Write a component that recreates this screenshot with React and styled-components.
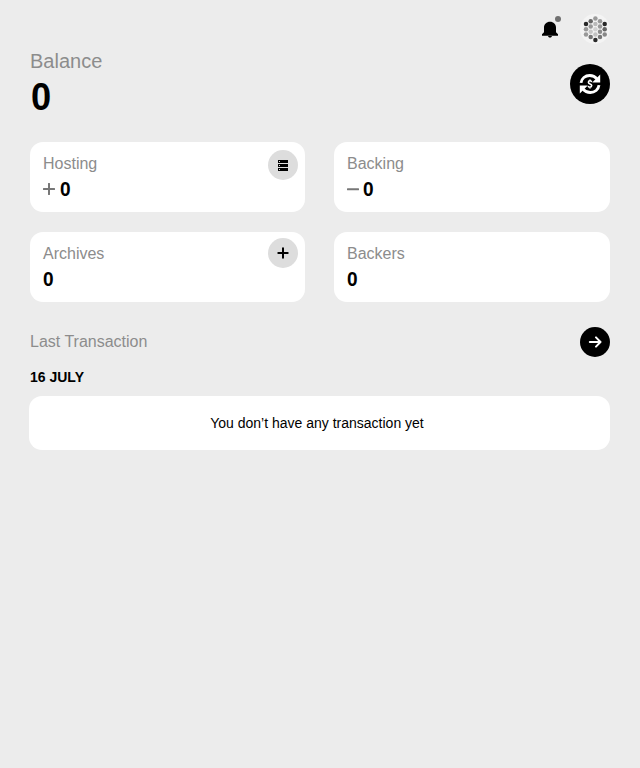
import React from "react";
import styled, { createGlobalStyle } from "styled-components";

const GlobalStyle = createGlobalStyle`
  * { box-sizing: border-box; }
  body {
    margin: 0;
    background: #ececec;
    color: #000;
    font-family: "Liberation Sans", Arial, sans-serif;
  }
`;

const Page = styled.main`
  min-height: 768px;
  padding: 14px 30px 0;
`;

const TopBar = styled.header`
  display: flex;
  justify-content: flex-end;
  align-items: center;
  gap: 18px;
  height: 30px;
`;

const BellButton = styled.div`
  position: relative;
  width: 20px;
  height: 20px;
  margin-right: 2px;
  svg { display: block; }
`;

const UnreadDot = styled.span`
  position: absolute;
  top: -3px;
  right: -1px;
  width: 6px;
  height: 6px;
  border-radius: 50%;
  background: #707070;
`;

const AvatarSvg = styled.svg`
  display: block;
  width: 30px;
  height: 30px;
`;

const BalanceRow = styled.section`
  display: flex;
  justify-content: space-between;
  align-items: flex-start;
  height: 98px;
  padding-top: 6px;
`;

const BalanceLabel = styled.div`
  font-size: 20px;
  line-height: 23px;
  color: #8c8c8c;
`;

const BalanceValue = styled.div`
  margin-top: 0;
  padding-left: 0.5px;
  font-size: 39px;
  font-weight: 700;
  line-height: 47px;
`;

const Digits = styled.span`
  display: inline-block;
  transform: scaleX(0.93);
  transform-origin: left center;
`;

const RoundButton = styled.button`
  display: flex;
  align-items: center;
  justify-content: center;
  flex: none;
  width: ${(p) => p.$size}px;
  height: ${(p) => p.$size}px;
  margin: ${(p) => p.$top || 0}px 0 0;
  padding: 0;
  border: 0;
  border-radius: 50%;
  background: ${(p) => (p.$light ? "#dddddd" : "#000")};
  svg { display: block; }
`;

const CardGrid = styled.section`
  display: grid;
  grid-template-columns: 275px 276px;
  grid-auto-rows: 70px;
  column-gap: 29px;
  row-gap: 20px;
`;

const Card = styled.article`
  display: flex;
  justify-content: space-between;
  padding: 0 7px 0 13px;
  border-radius: 13px;
  background: #fff;
`;

const CardLabel = styled.div`
  margin-top: 12px;
  font-size: 16px;
  line-height: 19px;
  color: #8c8c8c;
`;

const CardValue = styled.div`
  display: flex;
  align-items: center;
  gap: ${(p) => p.$gap}px;
  margin-top: 4px;
  font-size: 20.5px;
  font-weight: 700;
  line-height: 24px;
`;

const SectionHeader = styled.div`
  display: flex;
  align-items: center;
  justify-content: space-between;
  height: 30px;
  margin-top: 25px;
  font-size: 16px;
  color: #8c8c8c;
`;

const DateLabel = styled.h2`
  margin: 12px 0 11px;
  font-size: 14px;
  font-weight: 700;
  line-height: 16px;
`;

const EmptyCard = styled.div`
  display: flex;
  align-items: center;
  justify-content: center;
  height: 54px;
  margin-left: -1px;
  padding-right: 5px;
  border-radius: 13px;
  background: #fff;
  font-size: 14px;
`;

const AVATAR_DOTS = [
  [15.4, 4.6, "#999"], [15.4, 9.9, "#bababa"], [15.4, 15.2, "#d2d2d2"], [15.4, 20.5, "#c2c2c2"], [15.4, 25.9, "#292929"],
  [10.7, 7.2, "#666"], [10.7, 12.5, "#999"], [10.7, 17.8, "#c6c6c6"], [10.7, 23.1, "#777"],
  [20, 7.2, "#999"], [20, 12.5, "#999"], [20, 17.8, "#8c8c8c"], [20, 23.1, "#777"],
  [6, 9.9, "#292929"], [6, 15.2, "#999"], [6, 20.5, "#999"],
  [24.7, 9.9, "#292929"], [24.7, 15.2, "#666"], [24.7, 20.5, "#888"],
];

const Avatar = () => (
  <AvatarSvg viewBox="0 0 30 30">
    <circle cx="15" cy="15" r="15" fill="#f4f4f4" />
    {AVATAR_DOTS.map(([x, y, fill]) => (
      <circle key={`${x}-${y}`} cx={x} cy={y} r="2.25" fill={fill} />
    ))}
  </AvatarSvg>
);

const BellIcon = () => (
  <svg width="20" height="20" viewBox="0 0 20 20">
    <path d="M10 2.8C6.5 2.8 4 5.2 4 8.6v4.6L2 15.2v1.6h16v-1.6l-2-2V8.6c0-3.4-2.5-5.8-6-5.8ZM7.9 16.6h4.2a2.1 2.1 0 0 1-4.2 0Z" />
  </svg>
);

const ExchangeIcon = () => (
  <svg width="24" height="24" viewBox="0 0 24 24" fill="none">
    <path d="M3 10.9C3.5 6.5 7.2 3.5 11.7 3.5c3 0 5.5 1.2 7.2 3.4M21 13.1c-.5 4.4-4.2 7.4-8.7 7.4-3 0-5.5-1.2-7.2-3.4" stroke="#fff" strokeWidth="2.8" />
    <path d="M22.2 2.4v8h-8ZM1.8 21.6v-8h8Z" fill="#fff" />
    <path d="M13.7 10.1c-.2-.9-.8-1.3-1.7-1.3s-1.6.5-1.6 1.4c0 2.2 3.3 1.3 3.3 3.4 0 1-.7 1.6-1.7 1.6s-1.7-.5-1.8-1.4M12 7.5v1.3m0 6.4v1.3" stroke="#fff" strokeWidth="1.6" />
  </svg>
);

const SignIcon = ({ minus }) => (
  <svg width="12" height="12" viewBox="0 0 12 12">
    <path d={minus ? "M.8 6.2h10.4" : "M.8 6h10.4M6 .8v10.4"} fill="none" stroke="#777" strokeWidth="2" strokeLinecap="round" />
  </svg>
);

const StorageIcon = () => (
  <svg width="10" height="11" viewBox="0 0 10 11">
    <path d="M0 0h10v3H0ZM0 4h10v3H0ZM0 8h10v3H0Z" />
    <path d="M1 1h1v1H1ZM1 5h1v1H1ZM1 9h1v1H1Z" fill="#ddd" />
  </svg>
);

const PlusIcon = () => (
  <svg width="12" height="12" viewBox="0 0 12 12">
    <path d="M1.3 6h9.4M6 1.3v9.4" stroke="#000" strokeWidth="2" strokeLinecap="round" />
  </svg>
);

const ArrowIcon = () => (
  <svg width="14" height="12" viewBox="0 0 14 12">
    <path d="M1.8 6h10.4M8 1.4 12.5 6 8 10.6" fill="none" stroke="#fff" strokeWidth="2" strokeLinecap="round" strokeLinejoin="round" />
  </svg>
);

const StatCard = ({ label, sign, gap = 5, action, actionTop }) => (
  <Card>
    <div>
      <CardLabel>{label}</CardLabel>
      <CardValue $gap={gap}>
        {sign}
        <Digits>0</Digits>
      </CardValue>
    </div>
    {action && (
      <RoundButton $size={30} $light $top={actionTop} aria-label={`${label} action`}>
        {action}
      </RoundButton>
    )}
  </Card>
);

export default function App() {
  return (
    <>
      <GlobalStyle />
      <Page>
        <TopBar>
          <BellButton>
            <BellIcon />
            <UnreadDot />
          </BellButton>
          <Avatar />
        </TopBar>
        <BalanceRow>
          <div>
            <BalanceLabel>Balance</BalanceLabel>
            <BalanceValue><Digits>0</Digits></BalanceValue>
          </div>
          <RoundButton $size={40} $top={14} aria-label="Exchange">
            <ExchangeIcon />
          </RoundButton>
        </BalanceRow>
        <CardGrid>
          <StatCard label="Hosting" sign={<SignIcon />} action={<StorageIcon />} actionTop={8} />
          <StatCard label="Backing" sign={<SignIcon minus />} gap={4} />
          <StatCard label="Archives" action={<PlusIcon />} actionTop={6} />
          <StatCard label="Backers" />
        </CardGrid>
        <SectionHeader>
          <span>Last Transaction</span>
          <RoundButton $size={30} aria-label="All transactions">
            <ArrowIcon />
          </RoundButton>
        </SectionHeader>
        <DateLabel>16 JULY</DateLabel>
        <EmptyCard>You don’t have any transaction yet</EmptyCard>
      </Page>
    </>
  );
}
